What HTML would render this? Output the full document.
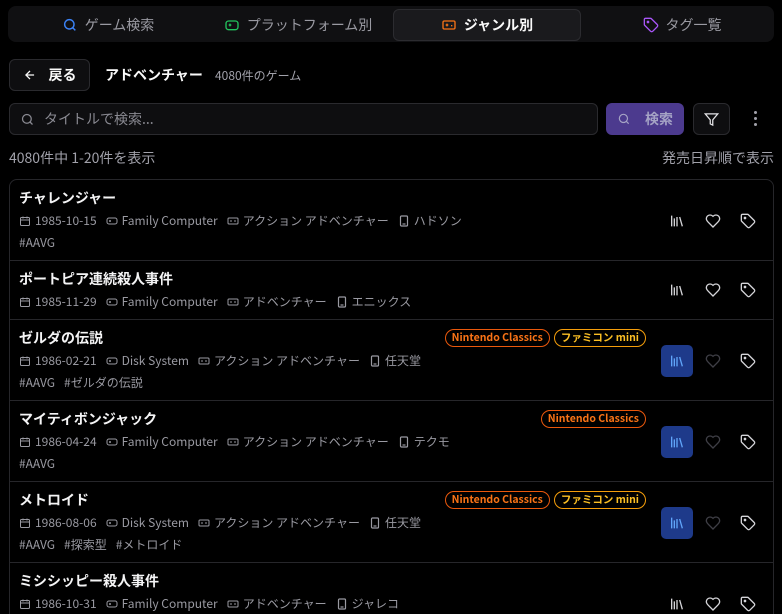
<!DOCTYPE html>
<html><head><meta charset="utf-8"><style>
*{box-sizing:border-box;margin:0;padding:0}
html{width:782px;height:614px;overflow:hidden}
body{width:782px;height:614px;background:#000;color:#e4e4e7;font-family:"Noto Sans CJK JP","Liberation Sans",sans-serif;overflow:hidden;position:relative}
.abs{position:absolute}
.tabs{left:8px;top:6px;width:766px;height:36px;background:#101012;border-radius:8px}
.tab{position:absolute;top:3px;height:32px;display:flex;align-items:center;justify-content:center;gap:7px;font-size:14px;color:#9a9aa2}
.tab.act{background:#1a1a1d;border:1px solid #2c2c30;border-radius:6px;color:#fafafa;font-weight:bold}
.btn{border:1px solid #2a2a2e;background:#0e0e10;border-radius:6px;display:flex;align-items:center;justify-content:center}
.g{color:#a1a1aa}
.list{left:9px;top:179px;width:765px;height:450px;border:1px solid #26262a;border-radius:8px}
.row{position:absolute;left:0;width:763px;border-bottom:1px solid #26262a}
.title{position:absolute;left:9px;font-size:14px;font-weight:bold;color:#f4f4f5;line-height:18px}
.meta{position:absolute;left:9px;font-size:12px;color:#9a9aa2;display:flex;align-items:center;white-space:nowrap;line-height:16px}
.meta svg{margin-right:4px}
.meta span{margin-right:9px}
.tags{position:absolute;left:9px;font-size:12px;color:#9a9aa2;line-height:16px}
.tags span{margin-right:9px}
.badges{position:absolute;right:127px;display:flex;gap:4px}
.bd{font-size:10.5px;font-weight:bold;border:1px solid #ea580c;color:#f97316;border-radius:10px;padding:0 6px;height:18px;line-height:16px}
.bd.y{border-color:#f59e0b;color:#fbbf24}
.ic{position:absolute;width:32px;height:32px;display:flex;align-items:center;justify-content:center}
.lib.on{background:#1e3a8a;border-radius:5px}
</style></head><body>
<div class="abs tabs">
 <div class="tab" style="left:10px;width:180px"><svg width="16" height="16" viewBox="0 0 24 24" fill="none" stroke="#3b82f6" stroke-width="2.2"><circle cx="11" cy="11" r="7"/><path d="m20 20-4-4"/></svg>ゲーム検索</div>
 <div class="tab" style="left:200px;width:180px"><svg width="16" height="16" viewBox="0 0 24 24" fill="none" stroke="#22c55e" stroke-width="2"><rect x="3" y="6" width="18" height="13" rx="4"/><path d="M7 12h4M9 10v4M15 11h.01M17 13h.01"/></svg>プラットフォーム別</div>
 <div class="tab act" style="left:385px;width:188px"><svg width="16" height="16" viewBox="0 0 24 24" fill="none" stroke="#f97316" stroke-width="2"><rect x="3" y="6" width="18" height="12" rx="2"/><path d="M7 12h4M9 10v4M15 13h2"/></svg>ジャンル別</div>
 <div class="tab" style="left:584px;width:180px"><svg width="16" height="16" viewBox="0 0 24 24" fill="none" stroke="#a855f7" stroke-width="2"><path d="M12.6 2.6A2 2 0 0 0 11.2 2H4a2 2 0 0 0-2 2v7.2a2 2 0 0 0 .6 1.4l8.7 8.7a2.4 2.4 0 0 0 3.4 0l6.6-6.6a2.4 2.4 0 0 0 0-3.4z"/><circle cx="7.5" cy="7.5" r="1"/></svg>タグ一覧</div>
</div>
<div class="abs btn" style="left:9px;top:59px;width:81px;height:32px;gap:12px;font-size:14px;font-weight:bold;color:#fafafa"><svg width="14" height="14" viewBox="0 0 24 24" fill="none" stroke="#fafafa" stroke-width="2.2"><path d="M19 12H5M12 19l-7-7 7-7"/></svg>戻る</div>
<div class="abs" style="left:105px;top:65px;font-size:14px;font-weight:bold;color:#fafafa">アドベンチャー</div>
<div class="abs g" style="left:215px;top:67px;font-size:12px">4080件のゲーム</div>
<div class="abs btn" style="left:9px;top:103px;width:589px;height:32px;justify-content:flex-start;padding-left:10px;gap:9px;font-size:14px;color:#8a8a92"><svg width="15" height="15" viewBox="0 0 24 24" fill="none" stroke="#8a8a92" stroke-width="2"><circle cx="11" cy="11" r="7"/><path d="m20 20-4-4"/></svg>タイトルで検索...</div>
<div class="abs" style="left:606px;top:103px;width:78px;height:32px;background:#4c3a8e;border-radius:6px;display:flex;align-items:center;justify-content:center;gap:14px;font-size:14px;font-weight:bold;color:#a5a3c5"><svg width="14" height="14" viewBox="0 0 24 24" fill="none" stroke="#a5a3c5" stroke-width="2"><circle cx="11" cy="11" r="7"/><path d="m20 20-4-4"/></svg>検索</div>
<div class="abs btn" style="left:693px;top:103px;width:37px;height:32px"><svg width="15" height="15" viewBox="0 0 24 24" fill="none" stroke="#e4e4e7" stroke-width="2"><path d="M22 3H2l8 9.5V19l4 2v-8.5z"/></svg></div>
<div class="abs" style="left:754px;top:111px;width:3px"><div style="width:3px;height:3px;background:#a1a1aa;border-radius:2px;margin-bottom:3px"></div><div style="width:3px;height:3px;background:#a1a1aa;border-radius:2px;margin-bottom:3px"></div><div style="width:3px;height:3px;background:#a1a1aa;border-radius:2px"></div></div>
<div class="abs g" style="left:9px;top:148px;font-size:14px">4080件中 1-20件を表示</div>
<div class="abs g" style="right:8px;top:148px;font-size:14px">発売日昇順で表示</div>
<div class="abs list" id="list"></div>
<script>
const cal='<svg width="12" height="12" viewBox="0 0 24 24" fill="none" stroke="#9a9aa2" stroke-width="2"><rect x="3" y="5" width="18" height="16" rx="2"/><path d="M8 3v4M16 3v4M3 10h18"/></svg>';
const pad='<svg width="12" height="12" viewBox="0 0 24 24" fill="none" stroke="#9a9aa2" stroke-width="2"><rect x="2" y="6" width="20" height="12" rx="4"/><path d="M6 12h4M8 10v4M15 11h.01M18 13h.01"/></svg>';
const gen='<svg width="12" height="12" viewBox="0 0 24 24" fill="none" stroke="#9a9aa2" stroke-width="2"><rect x="2" y="6" width="20" height="12" rx="2"/><path d="M6 12h4M14 12h4"/></svg>';
const bld='<svg width="12" height="12" viewBox="0 0 24 24" fill="none" stroke="#9a9aa2" stroke-width="2.4"><rect x="5" y="2" width="14" height="20" rx="2"/><path d="M9 18h6"/></svg>';
const lib=c=>`<svg width="16" height="16" viewBox="0 0 24 24" fill="none" stroke="${c}" stroke-width="2"><path d="m16 6 4 14M12 6v14M8 8v12M4 4v16"/></svg>`;
const heart=c=>`<svg width="16" height="16" viewBox="0 0 24 24" fill="none" stroke="${c}" stroke-width="2"><path d="M19 14c1.5-1.5 3-3.2 3-5.5A5.5 5.5 0 0 0 16.5 3c-1.8 0-3 .5-4.5 2-1.5-1.5-2.7-2-4.5-2A5.5 5.5 0 0 0 2 8.5c0 2.3 1.5 4 3 5.5l7 7z"/></svg>`;
const tag='<svg width="16" height="16" viewBox="0 0 24 24" fill="none" stroke="#d4d4d8" stroke-width="2"><path d="M12.6 2.6A2 2 0 0 0 11.2 2H4a2 2 0 0 0-2 2v7.2a2 2 0 0 0 .6 1.4l8.7 8.7a2.4 2.4 0 0 0 3.4 0l6.6-6.6a2.4 2.4 0 0 0 0-3.4z"/><circle cx="7.5" cy="7.5" r="1"/></svg>';
const rows=[
['チャレンジャー','1985-10-15','Family Computer','アクション アドベンチャー','ハドソン',['#AAVG'],[],0,0,81],
['ポートピア連続殺人事件','1985-11-29','Family Computer','アドベンチャー','エニックス',[],[],0,81,59],
['ゼルダの伝説','1986-02-21','Disk System','アクション アドベンチャー','任天堂',['#AAVG','#ゼルダの伝説'],['Nintendo Classics','ファミコン mini'],1,140,81],
['マイティボンジャック','1986-04-24','Family Computer','アクション アドベンチャー','テクモ',['#AAVG'],['Nintendo Classics'],1,221,81],
['メトロイド','1986-08-06','Disk System','アクション アドベンチャー','任天堂',['#AAVG','#探索型','#メトロイド'],['Nintendo Classics','ファミコン mini'],1,302,81],
['ミシシッピー殺人事件','1986-10-31','Family Computer','アドベンチャー','ジャレコ',[],[],0,383,81]];
let h='';
for(const r of rows){
 const [t,d,p,g,c,tg,bd,on,top,ht]=r;
 const ic=ht==59?13:25;
 h+=`<div class="row" style="top:${top}px;height:${ht}px">
 <div class="title" style="top:9px">${t}</div>
 <div class="meta" style="top:33px">${cal}<span>${d}</span>${pad}<span>${p}</span>${gen}<span>${g}</span>${bld}<span>${c}</span></div>
 ${tg.length?`<div class="tags" style="top:55px">${tg.map(x=>'<span>'+x+'</span>').join('')}</div>`:''}
 ${bd.length?`<div class="badges" style="top:9px">${bd.map(x=>`<div class="bd${x.includes('mini')?' y':''}">${x}</div>`).join('')}</div>`:''}
 <div class="ic lib${on?' on':''}" style="left:651px;top:${ic}px">${lib(on?'#60a5fa':'#d4d4d8')}</div>
 <div class="ic" style="left:687px;top:${ic}px">${heart(on?'#3f3f46':'#d4d4d8')}</div>
 <div class="ic" style="left:722px;top:${ic}px">${tag}</div></div>`;
}
document.getElementById('list').innerHTML=h;
</script>
</body></html>
